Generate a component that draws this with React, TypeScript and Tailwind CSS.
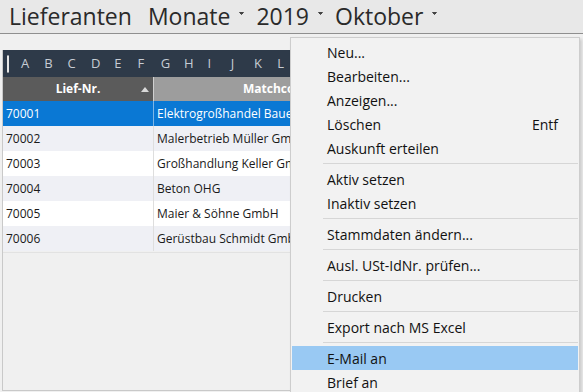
import React from "react";

const letters = ["A","B","C","D","E","F","G","H","I","J","K","L","M","N","O","P","Q","R","S","T","U","V","W","X","Y","Z"];

const rows = [
  ["70001", "Elektrogroßhandel Bauer GmbH"],
  ["70002", "Malerbetrieb Müller GmbH"],
  ["70003", "Großhandlung Keller GmbH"],
  ["70004", "Beton OHG"],
  ["70005", "Maier & Söhne GmbH"],
  ["70006", "Gerüstbau Schmidt GmbH"],
];

type Item = { label: string; shortcut?: string; sep?: boolean; active?: boolean };
const menu: Item[] = [
  { label: "Neu..." },
  { label: "Bearbeiten..." },
  { label: "Anzeigen..." },
  { label: "Löschen", shortcut: "Entf" },
  { label: "Auskunft erteilen" },
  { label: "", sep: true },
  { label: "Aktiv setzen" },
  { label: "Inaktiv setzen" },
  { label: "", sep: true },
  { label: "Stammdaten ändern..." },
  { label: "", sep: true },
  { label: "Ausl. USt-IdNr. prüfen..." },
  { label: "", sep: true },
  { label: "Drucken" },
  { label: "", sep: true },
  { label: "Export nach MS Excel" },
  { label: "", sep: true },
  { label: "E-Mail an", active: true },
  { label: "Brief an" },
];

function Caret() {
  return (
    <svg width="7" height="5" viewBox="0 0 7 5" className="ml-[8px] mr-[11px] mt-[-6px]">
      <path d="M1.5 1.5 L3.5 3.5 L5.5 1.5 Z" fill="#444" stroke="#444" strokeWidth="1" />
    </svg>
  );
}

export default function App() {
  return (
    <div
      className="relative w-[583px] h-[392px] overflow-hidden bg-[#f0f0f0] text-[#1a1a1a]"
      style={{ fontFamily: '"Open Sans", "Noto Sans", sans-serif' }}
    >
      {/* title bar */}
      <div className="h-[34px] bg-[#e8e8e8] border-b border-[#8f8f8f] flex items-center pl-[9px] text-[23px] text-[#2a2a2a] leading-none">
        <span>Lieferanten</span>
        <span className="ml-[16px]">Monate</span>
        <Caret />
        <span>2019</span>
        <Caret />
        <span>Oktober</span>
        <Caret />
      </div>

      {/* panel */}
      <div className="mt-[16px] ml-[2px] w-[289px] h-[341px] border-l border-r border-b border-[#c9c9c9] overflow-hidden">
        <div className="w-[580px]">
          {/* alphabet bar */}
          <div className="h-[27px] bg-[#2e3a49] flex items-center text-[13px] text-[#c6ccd4]">
            <div className="ml-[4px] w-[3px] h-[18px] border border-[#e6e6e6] rounded-[1px]" />
            <div className="flex ml-[12px]">
              {letters.map((l) => (
                <span key={l} className="w-[23.3px]">{l}</span>
              ))}
            </div>
          </div>
          {/* header */}
          <div className="h-[24px] flex text-[12px] font-bold text-white">
            <div className="w-[151px] bg-[#5b5b5b] relative flex items-center justify-center border-r border-[#d0d0d0]">
              Lief-Nr.
              <svg width="8" height="5" viewBox="0 0 8 5" className="absolute left-[138px] top-[10px]">
                <path d="M0 5 L4 0 L8 5 Z" fill="#d9d9d9" />
              </svg>
            </div>
            <div className="w-[244px] bg-[#9d9d9d] flex items-center justify-center">Matchcode</div>
            <div className="flex-1 bg-[#9d9d9d]" />
          </div>
          {/* rows */}
          {rows.map((r, i) => {
            const sel = i === 0;
            const bg = sel ? "bg-[#0a78d4] text-white" : i % 2 === 1 ? "bg-[#eff0f5]" : "bg-white";
            return (
              <div key={r[0]} className={`h-[25px] flex items-center text-[12px] ${bg}`}>
                <div className={`w-[151px] h-full flex items-center pl-[3px] border-r ${sel ? "border-[#7fb6e6]" : "border-[#dedede]"}`}>{r[0]}</div>
                <div className="pl-[3px] whitespace-nowrap">{r[1]}</div>
              </div>
            );
          })}
          <div className="h-[2px] border-b border-[#e2e2e2]" />
        </div>
      </div>

      {/* context menu */}
      <div
        className="absolute left-[290px] top-[37px] w-[290px] h-[360px] bg-[#f2f2f2] border border-[#cdcdcd] shadow-[2px_2px_3px_rgba(0,0,0,0.15)] pt-[2px] text-[14px] text-[#111]"
      >
        {menu.map((m, i) =>
          m.sep ? (
            <div key={i} className="h-[7px] flex items-center pl-[32px] pr-[1px]">
              <div className="h-px w-full bg-[#d6d6d6]" />
            </div>
          ) : (
            <div
              key={i}
              className={`h-[24px] flex items-center pl-[35px] pr-[20px] mx-[1px] ${m.active ? "bg-[#99c9f3]" : ""}`}
            >
              <span className="flex-1">{m.label}</span>
              {m.shortcut && <span>{m.shortcut}</span>}
            </div>
          )
        )}
      </div>
    </div>
  );
}
